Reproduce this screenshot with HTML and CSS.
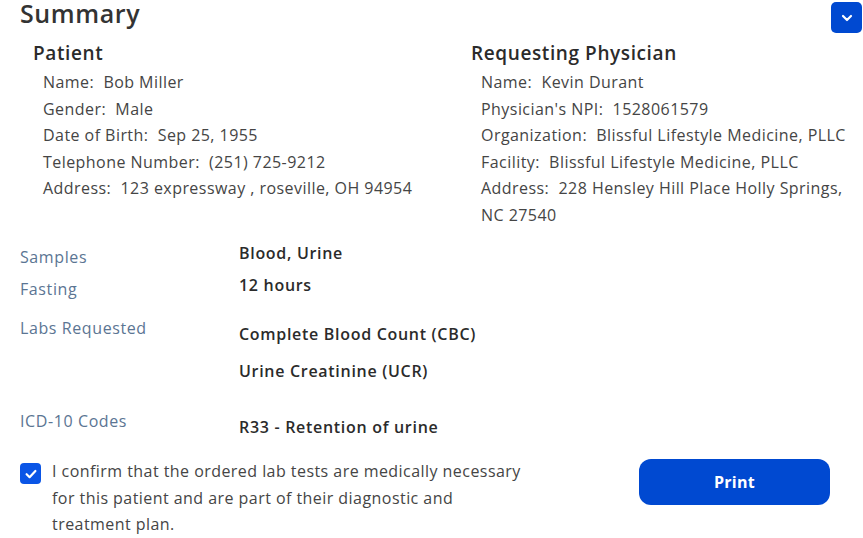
FILE: index.html
```html
<!DOCTYPE html>
<html>
<head>
<meta charset="utf-8">
<link rel="stylesheet" href="styles.css">
</head>
<body>
<div class="page">
  <div class="header">
    <h1 class="title">Summary</h1>
    <button class="toggle" aria-label="Collapse">
      <svg width="12" height="8" viewBox="0 0 12 8"><path d="M2 2l4 4 4-4" fill="none" stroke="#fff" stroke-width="2.2" stroke-linecap="round" stroke-linejoin="round"/></svg>
    </button>
  </div>
  <div class="parties">
    <div class="party">
      <h2 class="party-title">Patient</h2>
      <div class="party-rows">
        <div class="row">Name:&nbsp; Bob Miller</div>
        <div class="row">Gender:&nbsp; Male</div>
        <div class="row">Date of Birth:&nbsp; Sep 25, 1955</div>
        <div class="row">Telephone Number:&nbsp; (251) 725-9212</div>
        <div class="row">Address:&nbsp; 123 expressway , roseville, OH 94954</div>
      </div>
    </div>
    <div class="party">
      <h2 class="party-title">Requesting Physician</h2>
      <div class="party-rows">
        <div class="row">Name:&nbsp; Kevin Durant</div>
        <div class="row">Physician's NPI:&nbsp; 1528061579</div>
        <div class="row">Organization:&nbsp; Blissful Lifestyle Medicine, PLLC</div>
        <div class="row">Facility:&nbsp; Blissful Lifestyle Medicine, PLLC</div>
        <div class="row">Address:&nbsp; 228 Hensley Hill Place Holly Springs, NC 27540</div>
      </div>
    </div>
  </div>
  <div class="details">
    <div class="d-row r-samples">
      <div class="d-label">Samples</div>
      <div class="d-value">Blood, Urine</div>
    </div>
    <div class="d-row r-fasting">
      <div class="d-label">Fasting</div>
      <div class="d-value">12 hours</div>
    </div>
    <div class="d-row r-labs">
      <div class="d-label">Labs Requested</div>
      <div class="d-value">
        <div class="lab">Complete Blood Count (CBC)</div>
        <div class="lab">Urine Creatinine (UCR)</div>
      </div>
    </div>
    <div class="d-row r-icd">
      <div class="d-label">ICD-10 Codes</div>
      <div class="d-value">R33 - Retention of urine</div>
    </div>
  </div>
  <div class="footer">
    <label class="confirm">
      <span class="check">
        <svg width="12" height="10" viewBox="0 0 12 10"><path d="M1.6 5.2l3 3 5.8-6.2" fill="none" stroke="#fff" stroke-width="2.2" stroke-linecap="round" stroke-linejoin="round"/></svg>
      </span>
      <span class="confirm-text">I confirm that the ordered lab tests are medically necessary for this patient and are part of their diagnostic and treatment plan.</span>
    </label>
    <button class="print">Print</button>
  </div>
</div>
</body>
</html>
```
FILE: styles.css
```css
* { box-sizing: border-box; }
html, body { margin: 0; padding: 0; background: #fff; }
body {
  font-family: "Open Sans", "Liberation Sans", sans-serif;
  color: #444;
  width: 863px;
  height: 538px;
  overflow: hidden;
}
.page { padding: 0 1px 0 20px; }
.header {
  display: flex;
  justify-content: space-between;
  align-items: flex-start;
  height: 39px;
}
.title {
  margin: 0;
  font-size: 25px;
  font-weight: 600;
  letter-spacing: 0.6px;
  color: #333;
  line-height: 26px;
}
.toggle {
  width: 31px;
  height: 31px;
  margin-top: 2px;
  border: none;
  border-radius: 5px;
  background: #0049d1;
  display: flex;
  align-items: center;
  justify-content: center;
  padding: 0;
}
.parties {
  display: grid;
  grid-template-columns: 438px 1fr;
  padding-left: 13px;
}
.party-title {
  margin: 0;
  font-size: 19px;
  font-weight: 600;
  letter-spacing: 0.6px;
  color: #2b2b2b;
  line-height: 28px;
}
.party-rows { padding-left: 10px; padding-top: 2px; }
.row {
  font-size: 16px;
  letter-spacing: 0.45px;
  line-height: 26.5px;
  color: #454545;
}
.details { margin-top: 14px; font-size: 16px; }
.d-row {
  display: grid;
  grid-template-columns: 219px 1fr;
  align-items: start;
}
.d-label { color: #5b7593; line-height: 22px; letter-spacing: 0.6px; }
.d-value { font-weight: 600; color: #2b2b2b; line-height: 22px; letter-spacing: 0.7px; }
.r-samples .d-label, .r-fasting .d-label { padding-top: 4px; }
.r-fasting { margin-top: 6px; }
.r-labs { margin-top: 17px; }
.r-labs .d-value, .r-icd .d-value { padding-top: 6px; }
.lab + .lab { margin-top: 15px; }
.r-icd { margin-top: 28px; }
.footer {
  display: flex;
  justify-content: space-between;
  align-items: flex-start;
  margin-top: 20px;
  padding-right: 32px;
}
.confirm { display: flex; gap: 11px; width: 515px; }
.check {
  width: 21px;
  height: 21px;
  flex: none;
  border-radius: 4px;
  background: #0a55e6;
  display: flex;
  align-items: center;
  justify-content: center;
  margin-top: 5px;
}
.confirm-text { font-size: 16px; letter-spacing: 0.45px; line-height: 26.5px; color: #454545; }
.print {
  width: 191px;
  height: 46px;
  border: none;
  border-radius: 12px;
  background: #0049d1;
  color: #fff;
  font-family: inherit;
  font-size: 16px;
  font-weight: 700;
  letter-spacing: 0.3px;
  margin-top: 1px;
}
```
